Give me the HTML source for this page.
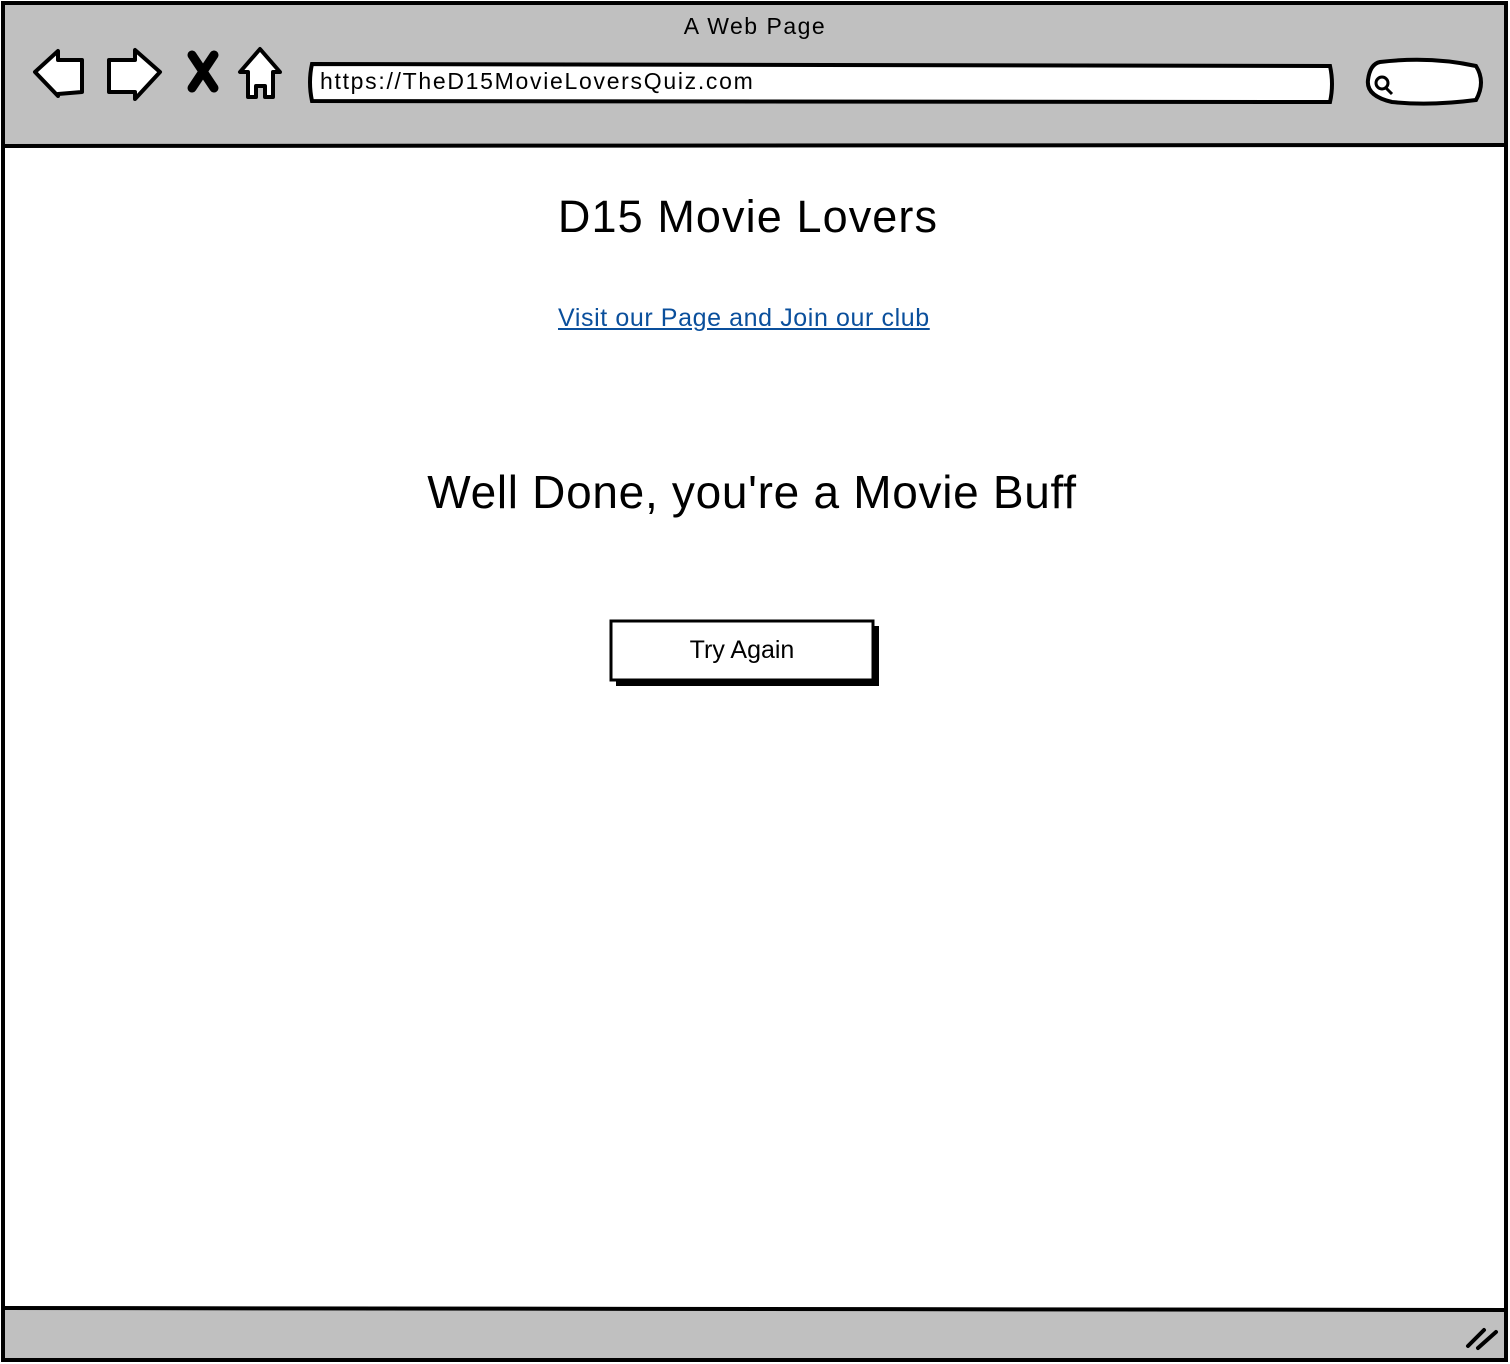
<!DOCTYPE html>
<html><head><style>
html,body{margin:0;padding:0;width:1510px;height:1364px;overflow:hidden;background:#fff;font-family:"Liberation Sans",sans-serif}
.abs{position:absolute}
</style></head><body>
<svg class="abs" style="left:0;top:0" width="1510" height="1364">
<rect x="3" y="3" width="1503" height="1357" fill="#fff" stroke="#000" stroke-width="4"/>
<rect x="5" y="5" width="1499" height="140" fill="#c0c0c0"/>
<line x1="4" y1="146" x2="1506" y2="145" stroke="#000" stroke-width="4"/>
<rect x="5" y="1309" width="1499" height="49" fill="#c0c0c0"/>
<path d="M4 1308 L1506 1310" stroke="#000" stroke-width="4"/>
<path d="M1468 1346 L1484 1330 M1478 1348 L1496 1332" stroke="#000" stroke-width="4" stroke-linecap="round"/>
<path d="M35 72 L58 51 L58 60 L82 60 L82 92 L58 94 L58 96 Z" fill="#fff" stroke="#000" stroke-width="4" stroke-linejoin="round"/>
<path d="M160 72 L135 50 L135 60 L109 60 L109 92 L135 92 L135 99 Z" fill="#fff" stroke="#000" stroke-width="4" stroke-linejoin="round"/>
<path d="M192 55 L214 88 M214 55 L192 88" stroke="#000" stroke-width="9" stroke-linecap="round"/>
<path d="M260 49 L240 72 L248 72 L248 97 L256 97 L256 86 L265 86 L265 97 L273 97 L273 72 L280 72 Z" fill="#fff" stroke="#000" stroke-width="4" stroke-linejoin="round"/>
<path d="M312 64 L1330 66 Q1334 84 1330 102 L312 101 Q308 82 312 64 Z" fill="#fff" stroke="#000" stroke-width="4"/>
<path d="M1380 62 Q1430 56 1476 66 Q1486 82 1476 100 Q1430 106 1392 102 Q1366 96 1368 80 Q1370 64 1380 62 Z" fill="#fff" stroke="#000" stroke-width="4"/>
<circle cx="1382" cy="83" r="6" fill="none" stroke="#000" stroke-width="3"/>
<line x1="1386" y1="88" x2="1392" y2="94" stroke="#000" stroke-width="3"/>
<rect x="616" y="626" width="263" height="60" fill="#000"/>
<rect x="611" y="621" width="262" height="59" fill="#fff" stroke="#000" stroke-width="3"/>
</svg>
<div class="abs" style="left:0;width:1510px;top:13px;text-align:center;font-size:23px;letter-spacing:1.5px">A Web Page</div>
<div class="abs" style="left:320px;top:68px;font-size:23px;letter-spacing:1.7px">https://TheD15MovieLoversQuiz.com</div>
<div class="abs" style="left:0;width:1496px;top:191px;text-align:center;font-size:45px;letter-spacing:1.1px">D15 Movie Lovers</div>
<div class="abs" style="left:558px;top:304px;font-size:25px;color:#0a4f9c;text-decoration:underline;letter-spacing:0.6px">Visit our Page and Join our club</div>
<div class="abs" style="left:0;width:1504px;top:465px;text-align:center;font-size:46px;letter-spacing:0.7px">Well Done, you're a Movie Buff</div>
<div class="abs" style="left:611px;width:262px;top:636px;text-align:center;font-size:25px">Try Again</div>
</body></html>
